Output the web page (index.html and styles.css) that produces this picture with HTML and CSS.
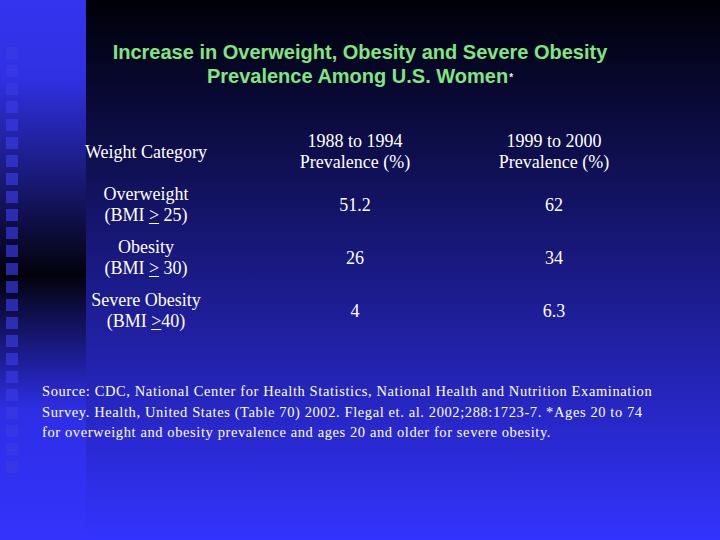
FILE: index.html
```html
<!DOCTYPE html>
<html lang="en">
<head>
<meta charset="utf-8">
<title>Increase in Overweight, Obesity and Severe Obesity</title>
<link rel="stylesheet" href="styles.css">
</head>
<body>
<main class="slide">
  <h1 class="title">Increase in Overweight, Obesity and Severe Obesity<br>Prevalence Among U.S. Women<span class="star">*</span></h1>
  <div class="table">
    <div class="cell">Weight Category</div>
    <div class="cell">1988 to 1994<br>Prevalence (%)</div>
    <div class="cell">1999 to 2000<br>Prevalence (%)</div>

    <div class="cell">Overweight<br>(BMI <u>&gt;</u> 25)</div>
    <div class="cell">51.2</div>
    <div class="cell">62</div>

    <div class="cell">Obesity<br>(BMI <u>&gt;</u> 30)</div>
    <div class="cell">26</div>
    <div class="cell">34</div>

    <div class="cell">Severe Obesity<br>(BMI <u>&gt;</u>40)</div>
    <div class="cell">4</div>
    <div class="cell">6.3</div>
  </div>
  <p class="source">Source: CDC, National Center for Health Statistics, National Health and Nutrition Examination<br>Survey. Health, United States (Table 70) 2002. Flegal et. al. 2002;288:1723-7. *Ages 20 to 74<br>for overweight and obesity prevalence and ages 20 and older for severe obesity.</p>
</main>
</body>
</html>
```
FILE: styles.css
```css
html, body {
  margin: 0;
  padding: 0;
}

body {
  width: 720px;
  height: 540px;
  overflow: hidden;
  background:
    repeating-linear-gradient(to bottom, rgba(57, 57, 227, 0.68) 0 12px, transparent 12px 18px) 6px 47px / 12px 432px no-repeat,
    linear-gradient(to bottom, #3434f0 0, #3030e2 80px, #02020c 275px, #2e2ee6 410px, #3333fc 540px) 0 0 / 86px 540px no-repeat,
    linear-gradient(to bottom, #000008 0, #3333ff 540px);
  color: #ffffff;
}

.slide {
  padding-top: 40px;
}

.title {
  margin: 0;
  font-family: "Liberation Sans", Arial, sans-serif;
  font-weight: bold;
  font-size: 20px;
  line-height: 24px;
  color: #80e680;
  text-align: center;
}

.star {
  font-size: 10px;
  color: #e8f0e8;
  vertical-align: 2px;
  margin-left: 1px;
}

.table {
  margin: 41px 0 0 46px;
  display: grid;
  grid-template-columns: 200px 218px 180px;
  grid-auto-rows: 42px;
  row-gap: 11px;
  align-items: center;
  font-family: "Liberation Serif", "Times New Roman", serif;
  font-size: 18px;
  line-height: 21px;
  text-align: center;
}

.cell u {
  text-decoration-thickness: 1px;
  text-underline-offset: 2px;
}

.source {
  margin: 49px 0 0 42px;
  font-family: "Liberation Serif", "Times New Roman", serif;
  font-size: 14.5px;
  line-height: 20.5px;
  letter-spacing: 0.6px;
  white-space: nowrap;
}
```
